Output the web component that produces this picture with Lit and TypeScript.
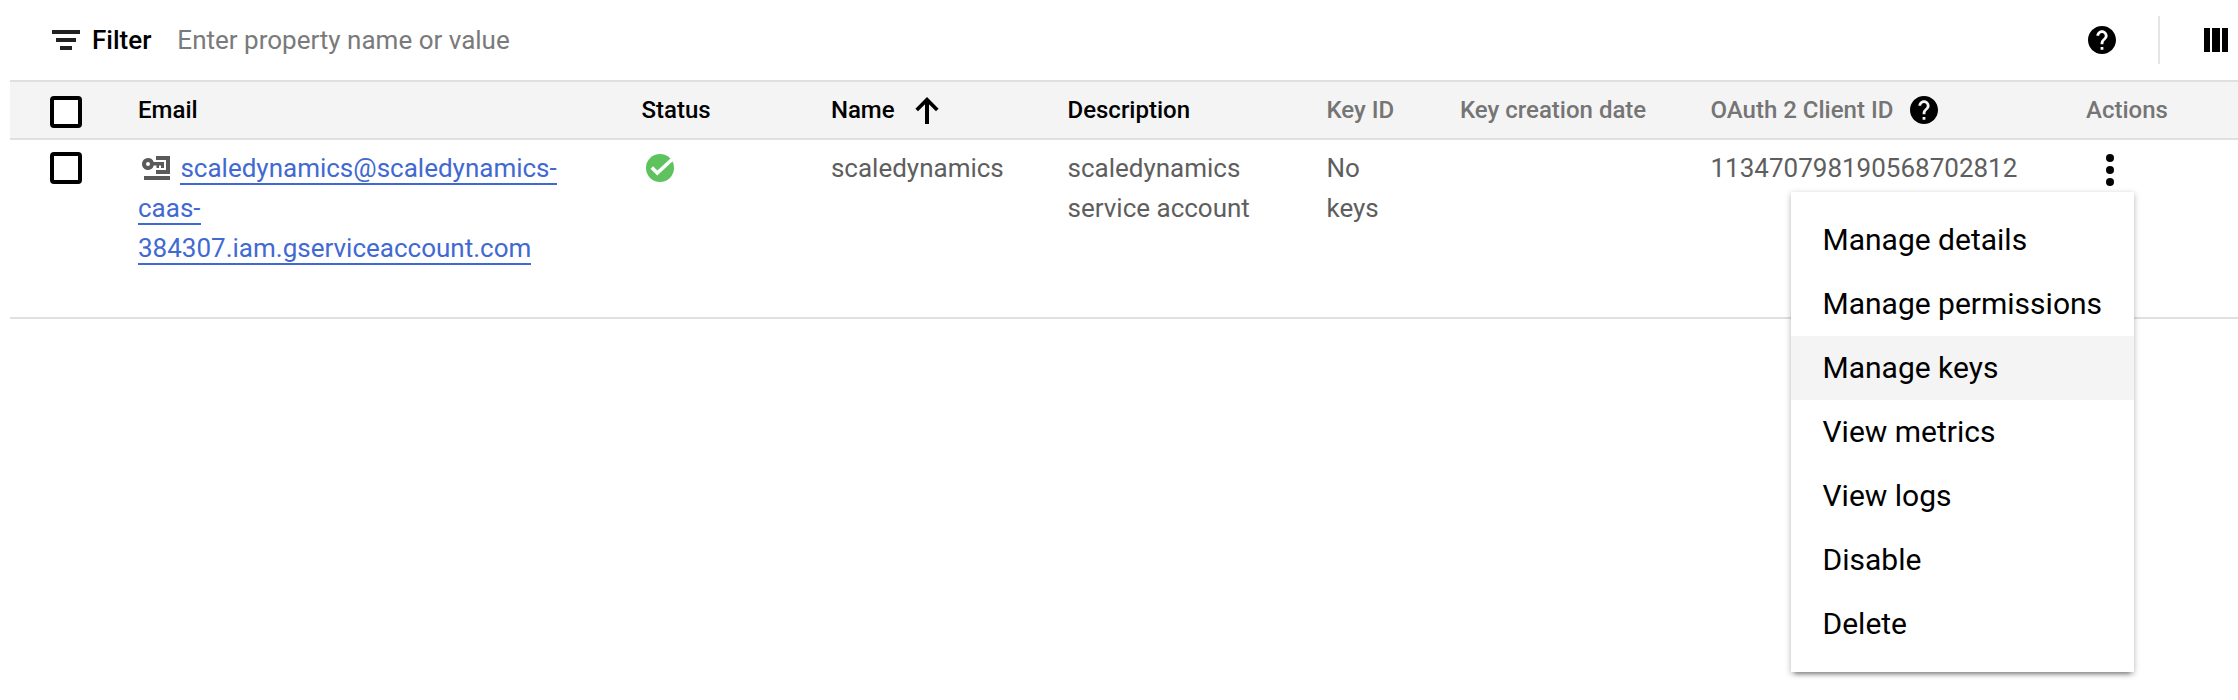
import { LitElement, html, css } from "lit";
import { customElement, state } from "lit/decorators.js";

const helpIcon = html`<svg class="help" width="28" height="28" viewBox="2 2 20 20">
  <path d="M12 2C6.48 2 2 6.48 2 12s4.48 10 10 10 10-4.48 10-10S17.52 2 12 2zm1 17h-2v-2h2v2zm2.07-7.75l-.9.92C13.45 12.9 13 13.5 13 15h-2v-.5c0-1.1.45-2.1 1.17-2.83l1.24-1.26c.37-.36.59-.86.59-1.41 0-1.1-.9-2-2-2s-2 .9-2 2H8c0-2.21 1.79-4 4-4s4 1.79 4 4c0 .88-.36 1.68-.93 2.25z"/>
</svg>`;

@customElement("app-root")
export class AppRoot extends LitElement {
  @state() private active = "Manage keys";

  private readonly items = [
    "Manage details",
    "Manage permissions",
    "Manage keys",
    "View metrics",
    "View logs",
    "Disable",
    "Delete",
  ];

  static styles = css`
    :host {
      display: block;
      box-sizing: border-box;
      height: 700px;
      background: #fff;
      overflow: hidden;
      font: 400 26px/40px Roboto, sans-serif;
      color: #5e5e5e;
    }
    svg { display: block; flex: none; }
    .toolbar {
      display: flex;
      align-items: center;
      height: 80px;
      box-sizing: border-box;
      padding: 0 10px 0 52px;
    }
    .filter { margin-left: 12px; font-weight: 500; color: #000; }
    .placeholder { margin-left: 26px; flex: 1; color: #7a7a7a; }
    .divider { width: 2px; height: 48px; margin: 0 44px 0 42px; background: #e5e5e5; }
    .table { margin-left: 10px; }
    .row {
      display: grid;
      grid-template-columns: 128px 503.5px 189.4px 236.6px 259px 133.5px 250.5px 375.5px 1fr;
      box-sizing: border-box;
      border-bottom: 2px solid #e0e0e0;
    }
    .head {
      height: 60px;
      border-top: 2px solid #e0e0e0;
      background: #f4f4f4;
      align-items: center;
      font-size: 24px;
      font-weight: 500;
      color: #757575;
    }
    .head .strong { color: #000; }
    .cell { display: flex; align-items: center; }
    .body { height: 179px; padding-top: 8px; }
    .box {
      box-sizing: border-box;
      width: 32px;
      height: 32px;
      margin: 4px 0 0 40px;
      border: 4px solid #000;
      border-radius: 4px;
      background: #fff;
    }
    .arrow { margin-left: 20.5px; }
    .head .help { margin-left: 17px; }
    .key { display: inline-block; margin: 0 10.4px 0 4px; vertical-align: -3px; }
    .link { color: #4169d2; border-bottom: 2px solid #4169d2; text-decoration: none; }
    .ok { margin: 6px 0 0 4.5px; }
    .dots { margin: 6px 0 0 20px; }
    .more { position: relative; }
    .menu {
      position: absolute;
      top: 44px;
      right: 104px;
      width: 343px;
      box-sizing: border-box;
      padding: 16px 0;
      background: #fff;
      box-shadow: 0 6px 4px -4px rgba(0, 0, 0, 0.3), 0 2px 6px rgba(0, 0, 0, 0.3);
      color: #000;
      font-size: 30px;
      line-height: 64px;
      white-space: nowrap;
    }
    .item { height: 64px; padding-left: 31.5px; }
    .item.active { background: #f4f4f4; }
  `;

  render() {
    return html`
      <div class="toolbar">
        <svg width="28" height="20" viewBox="0 0 28 20" fill="#212121">
          <path d="M0 0h28v4H0zM4 8h20v4H4zM8 16h12v4H8z"/>
        </svg>
        <span class="filter">Filter</span>
        <span class="placeholder">Enter property name or value</span>
        ${helpIcon}
        <div class="divider"></div>
        <svg width="24" height="24" viewBox="0 0 24 24">
          <path d="M0 0h6v24H0zM8 0h8v24H8zM18 0h6v24h-6z"/>
        </svg>
      </div>
      <div class="table">
        <div class="row head">
          <div class="box"></div>
          <div class="strong">Email</div>
          <div class="strong">Status</div>
          <div class="cell strong">Name
            <svg class="arrow" width="24" height="27" viewBox="0 0 24 27" fill="none" stroke="#000">
              <path d="M12 27V3" stroke-width="4"/>
              <path d="M1.7 13L12 2.7 22.3 13" stroke-width="3.7"/>
            </svg>
          </div>
          <div class="strong">Description</div>
          <div>Key ID</div>
          <div>Key creation date</div>
          <div class="cell">OAuth 2 Client ID ${helpIcon}</div>
          <div>Actions</div>
        </div>
        <div class="row body">
          <div class="box"></div>
          <div>
            <svg class="key" width="28" height="24" viewBox="0 0 28 24" fill="#5a5a5a">
              <path d="M14 0h14v18H14v-4h10V4H14zM2 20h26v4H2z"/>
              <path fill-rule="evenodd" d="M6 2a6 6 0 0 1 5.7 4H22v6h-3V9.5h-2V12h-2.5V9.5H11.8A6 6 0 1 1 6 2zM6 6a2 2 0 1 0 0 4 2 2 0 0 0 0-4z"/>
            </svg><a class="link">scaledynamics@scaledynamics-<br>caas-<br>384307.iam.gserviceaccount.com</a>
          </div>
          <div>
            <svg class="ok" width="28" height="28" viewBox="0 0 28 28">
              <circle cx="14" cy="14" r="14" fill="#5ec35e"/>
              <path d="M5.8 13.5l5.5 5.5L27 4.5" fill="none" stroke="#fff" stroke-width="3.6"/>
            </svg>
          </div>
          <div>scaledynamics</div>
          <div>scaledynamics<br>service account</div>
          <div>No<br>keys</div>
          <div></div>
          <div>113470798190568702812</div>
          <div class="more">
            <svg class="dots" width="8" height="32" viewBox="0 0 8 32">
              <circle cx="4" cy="4" r="4"/><circle cx="4" cy="16" r="4"/><circle cx="4" cy="28" r="4"/>
            </svg>
            <div class="menu">
              ${this.items.map((label) => html`
                <div class="item ${label === this.active ? "active" : ""}">${label}</div>`)}
            </div>
          </div>
        </div>
      </div>`;
  }
}
